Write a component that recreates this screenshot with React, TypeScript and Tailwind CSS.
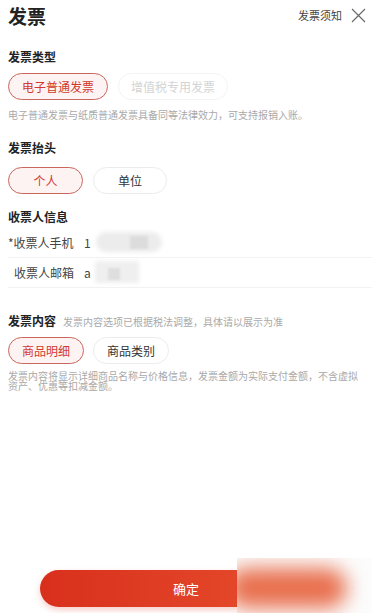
import React from "react";

const font = { fontFamily: '"Noto Sans CJK SC", "Noto Sans", sans-serif' };

function Pill({ label, active, disabled, w }: { label: string; active?: boolean; disabled?: boolean; w: string }) {
  const cls = active
    ? "border-[#c9665d] bg-[#fdf3f2] text-[#d2392c]"
    : disabled
    ? "border-[#f3f3f3] bg-white text-[#d4d4d4]"
    : "border-[#ececec] bg-white text-[#333]";
  return (
    <div className={`h-[27px] ${w} rounded-full border flex items-center justify-center text-[12px] leading-none ${cls}`}>
      {label}
    </div>
  );
}

export default function App() {
  return (
    <div style={font} className="relative w-[372px] h-[613px] bg-white overflow-hidden text-[#222]">
      <div className="flex items-center justify-between pl-[8px] pr-[6px] h-[30px]">
        <div className="text-[19px] font-bold leading-none">发票</div>
        <div className="flex items-center gap-[9px]">
          <span className="text-[11px] text-[#444]">发票须知</span>
          <svg width="15" height="15" viewBox="0 0 15 15" fill="none" stroke="#666" strokeWidth="1.1">
            <path d="M1 1L14 14M14 1L1 14" />
          </svg>
        </div>
      </div>

      <div className="px-[8px] pt-[21px]">
        <div className="text-[12px] font-bold leading-none">发票类型</div>
        <div className="flex gap-[10px] mt-[10px]">
          <Pill label="电子普通发票" active w="w-[100px]" />
          <Pill label="增值税专用发票" disabled w="w-[110px]" />
        </div>
        <div className="text-[10px] text-[#a9a9a9] mt-[10px] leading-none">
          电子普通发票与纸质普通发票具备同等法律效力，可支持报销入账。
        </div>

        <div className="text-[12px] font-bold leading-none mt-[22px]">发票抬头</div>
        <div className="flex gap-[10px] mt-[13px]">
          <Pill label="个人" active w="w-[75px]" />
          <Pill label="单位" w="w-[74px]" />
        </div>

        <div className="text-[12px] font-bold leading-none mt-[17px]">收票人信息</div>
      </div>

      <div className="pl-[8px] mt-[5px]">
        <div className="relative flex items-center h-[30px] border-b border-[#f2f2f2] text-[12px] text-[#444]">
          <span className="w-[76px]">*收票人手机</span>
          <span>1</span>
          <div className="absolute left-[88px] top-[4px] w-[66px] h-[20px] rounded-full bg-[#ececec] blur-[2px]" />
          <div className="absolute left-[122px] top-[8px] w-[18px] h-[13px] bg-[#dcdcdc] blur-[1px]" />
        </div>
        <div className="relative flex items-center h-[30px] border-b border-[#f2f2f2] text-[12px] text-[#444]">
          <span className="w-[76px] pl-[6px]">收票人邮箱</span>
          <span>a</span>
          <div className="absolute left-[87px] top-[3px] w-[44px] h-[22px] bg-[#efefef] blur-[2px]" />
          <div className="absolute left-[100px] top-[10px] w-[12px] h-[12px] bg-[#dedede] blur-[1px]" />
        </div>
      </div>

      <div className="px-[8px] mt-[27px]">
        <div className="flex items-baseline gap-[7px]">
          <span className="text-[12px] font-bold leading-none">发票内容</span>
          <span className="text-[10px] text-[#aaa] leading-none">发票内容选项已根据税法调整，具体请以展示为准</span>
        </div>
        <div className="flex gap-[9px] mt-[10px]">
          <Pill label="商品明细" active w="w-[76px]" />
          <Pill label="商品类别" w="w-[76px]" />
        </div>
        <div className="text-[10px] text-[#a9a9a9] mt-[7px] leading-[10px] pr-[4px]">
          发票内容将显示详细商品名称与价格信息，发票金额为实际支付金额，不含虚拟资产、优惠等扣减金额。
        </div>
      </div>

      <div className="absolute left-[40px] top-[570px] w-[292px] h-[37px] rounded-full bg-gradient-to-r from-[#d82f1c] to-[#e9502f] shadow-[0_3px_6px_rgba(220,60,40,0.25)] flex items-center justify-center text-white text-[13px]">
        确定
      </div>

      <div className="absolute left-[237px] top-[558px] w-[135px] h-[55px] bg-[#fcfcfc] overflow-hidden">
        <div className="absolute left-[-10px] top-[10px] w-[120px] h-[40px] rounded-full bg-[#e8704f] blur-[10px]" />
      </div>
    </div>
  );
}
